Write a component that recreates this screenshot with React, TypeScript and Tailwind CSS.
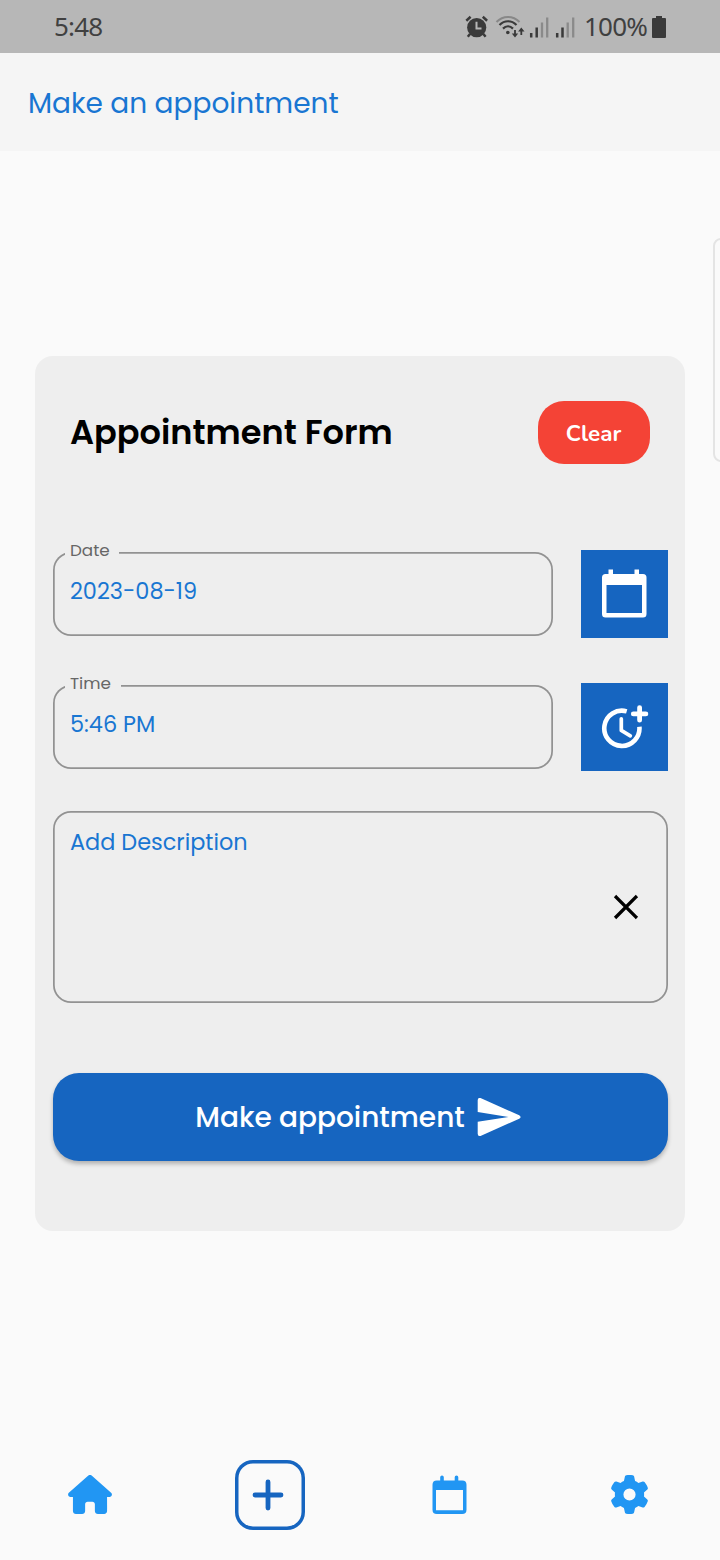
import React from "react";
import { FaGear, FaHouse } from "react-icons/fa6";

function StatusBar() {
  return (
    <header className="flex h-[53px] items-center bg-[#b7b7b7] pr-[54px] pl-[54px] font-['Noto_Sans',sans-serif] text-[26px] text-[#404040]">
      <span className="leading-[53px] tracking-[-0.8px]">5:48</span>
      <svg className="ml-auto h-[26px] w-[112px]" viewBox="0 0 112 26" fill="none">
        <circle cx="11.7" cy="13.6" r="9.6" fill="#3a3a3a" />
        <path d="M1.3 6.7 5.6 2.8M22.1 6.7 17.8 2.8M5 20l-2.2 2.7M18.400 20l2.200 2.700" stroke="#3a3a3a" strokeWidth="2.500" />
        <path d="M11.500 7.800v6.600h5" stroke="#b7b7b7" strokeWidth="2" />
        <path d="M31.500 8C38 1.300 48 1.300 54.500 8" stroke="#888" strokeWidth="2" />
        <path d="M34.500 11c5-5 12-5 17 0M38 14.600c3-3 7-3 10 0" stroke="#3a3a3a" strokeWidth="2.200" />
        <circle cx="42.800" cy="18.500" r="1.800" fill="#3a3a3a" />
        <path d="M50 16v6M56.300 21v-6" stroke="#3a3a3a" strokeWidth="1.800" />
        <path d="M46.800 19.500h6.400L50 23.500zM53.100 17.500h6.400l-3.200-4z" fill="#3a3a3a" />
        <path d="M66.200 19v4.500M71.700 13.500v10M92.200 19v4.500M97.500 13.500v10" stroke="#3a3a3a" strokeWidth="2.500" />
        <path d="M77 8.500v15M82.200 3.500v20M102.700 8.500v15M108.200 3.500v20" stroke="#8a8a8a" strokeWidth="2.300" />
      </svg>
      <span className="ml-[7px] w-[65px] leading-[53px] tracking-[-0.800px]">100%</span>
      <svg className="ml-[3px] h-[24px] w-[14px]" viewBox="0 0 14 24" fill="#3a3a3a">
        <path d="M4 1h6v2h3q1 0 1 1v18q0 1-1 1H1q-1 0-1-1V4q0-1 1-1h3z" />
      </svg>
    </header>
  );
}

function CalendarIcon() {
  return (
    <svg className="h-[50px] w-[46px]" viewBox="0 0.4 46 50" fill="white">
      <path fillRule="evenodd" d="M7.500 1H12v4.500h21.500V1H38v4.500h4q3.500 0 3.500 3.500v36.500q0 3.500-3.500 3.500H4.500Q1 49 1 45.500V9q0-3.500 3.500-3.500h3zM5.500 16.500v28H41v-28z" />
    </svg>
  );
}

function MoreTimeIcon() {
  return (
    <svg className="ml-[2px] h-[46px] w-[48px]" viewBox="0 0 48 46" fill="none" stroke="white">
      <path d="M25.700 7.400A17.600 17.600 0 1 0 38.400 22.700" strokeWidth="4.600" />
      <path d="M20.300 14.800v11.600l9 5.400" strokeWidth="3.700" strokeLinecap="round" strokeLinejoin="round" />
      <path d="M38.600 3.600v12.600M32.300 9.900h12.600" strokeWidth="4.800" strokeLinecap="round" />
    </svg>
  );
}

function Field({ label, value, labelClass, children }: {
  label: string; value: string; labelClass: string; children: React.ReactNode;
}) {
  return (
    <div className="flex h-[88px] items-start justify-between">
      <div className="relative mt-[2px] h-[84px] w-[499.5px] rounded-[18px] pt-[20px] pl-[17px] shadow-[inset_0_0_0_1.75px_#929292]">
        <span className={`absolute -top-[14px] left-[12px] h-[24px] bg-[#eeeeee] pl-[5px] text-[16.8px] leading-[24px] text-[#666666] ${labelClass}`}>{label}</span>
        <div className="text-[22.4px] leading-[38px] text-[#1976d2]">{value}</div>
      </div>
      <button className="flex h-[87.5px] w-[87.5px] items-center justify-center bg-[#1665c0]">{children}</button>
    </div>
  );
}

function BottomNav() {
  return (
    <nav className="grid h-[130px] grid-cols-4 items-center justify-items-center text-[#2196f3]">
      <FaHouse className="mb-[2px] h-[39px] w-[44px]" />
      <div className="flex h-[70px] w-[70px] items-center justify-center rounded-[18px] shadow-[inset_0_0_0_3.5px_#1665c0]">
        <svg className="mr-[4px] mb-px h-[32px] w-[32px]" viewBox="0 0 32 32" stroke="#1665c0" strokeWidth="4.800" strokeLinecap="round">
          <path d="M16 3v26M3 16h26" />
        </svg>
      </div>
      <svg className="mr-[2px] mb-px h-[40px] w-[35px]" viewBox="0 0 35 40" fill="currentColor">
        <path fillRule="evenodd" d="M8.200 2.300q0-1.800 1.800-1.800t1.800 1.800v3.200h10.900V2.300q0-1.800 1.800-1.800t1.800 1.800v3.200h3.900q4.300 0 4.300 4.300v25q0 4.300-4.300 4.300H4.800Q.5 39.100.5 34.800v-25q0-4.300 4.300-4.300h3.400zM4 15v20.300h27V15z" />
      </svg>
      <FaGear className="mr-[2px] mb-[2px] h-[39px] w-[39px]" />
    </nav>
  );
}

export default function App() {
  return (
    <div className="relative flex h-[1560px] w-[720px] flex-col overflow-hidden bg-[#fafafa] font-['Poppins','Inter',sans-serif]">
      <StatusBar />
      <div className="flex h-[98px] items-center bg-[#f5f5f5] pt-[3px] pl-[28px]">
        <h1 className="text-[28px] leading-[40px] text-[#1976d2]">Make an appointment</h1>
      </div>
      <div className="absolute top-[238px] -right-[12px] h-[224px] w-[19px] rounded-[8px] border-2 border-[#e4e4e4]" />

      <main className="mx-[35px] mt-[205px] flex h-[875px] flex-col rounded-[18px] bg-[#eeeeee] pr-[17px] pl-[18px]">
        <div className="mt-[45px] flex h-[63px] items-center justify-between pr-[18px] pl-[17px]">
          <h2 className="text-[33.6px] leading-[48px] font-semibold text-black">Appointment Form</h2>
          <button className="h-[63px] w-[112px] rounded-[26px] bg-[#f44336] pt-[3px] pr-px font-['Nunito','Open_Sans',sans-serif] text-[22.4px] font-bold text-white">Clear</button>
        </div>
        <div className="mt-[86px] flex flex-col gap-[45px]">
          <Field label="Date" value="2023-08-19" labelClass="w-[54px]">
            <CalendarIcon />
          </Field>
          <Field label="Time" value="5:46 PM" labelClass="w-[56px]">
            <MoreTimeIcon />
          </Field>
        </div>
        <div className="mt-[40px] flex h-[192px] justify-between rounded-[18px] pt-[12px] pr-[29px] pl-[17px] shadow-[inset_0_0_0_1.75px_#929292]">
          <span className="text-[22.4px] leading-[38px] text-[#1976d2]">Add Description</span>
          <svg className="mt-[71px] h-[26px] w-[26px]" viewBox="0 0 26 26" stroke="black" strokeWidth="3.300" strokeLinecap="square">
            <path d="M3.200 3.200l19.600 19.600M22.800 3.200L3.200 22.800" />
          </svg>
        </div>
        <button className="mt-[70px] flex h-[88px] items-center justify-center gap-[12px] rounded-[26px] bg-[#1665c0] pr-[5px] text-white shadow-[0_3px_4px_rgba(0,0,0,0.25)]">
          <span className="mt-px text-[28px] leading-[40px] font-medium">Make appointment</span>
          <svg className="h-[40px] w-[44px]" viewBox="0 0 44 40" fill="white">
            <path d="M.7 3.200Q.7.200 3.500 1.100L42.200 18.200Q45 20 42.200 21.800L3.500 38.900Q.7 39.600.7 36.800V24.800L31.500 20 .7 15z" />
          </svg>
        </button>
      </main>
      <div className="mt-auto"><BottomNav /></div>
    </div>
  );
}
